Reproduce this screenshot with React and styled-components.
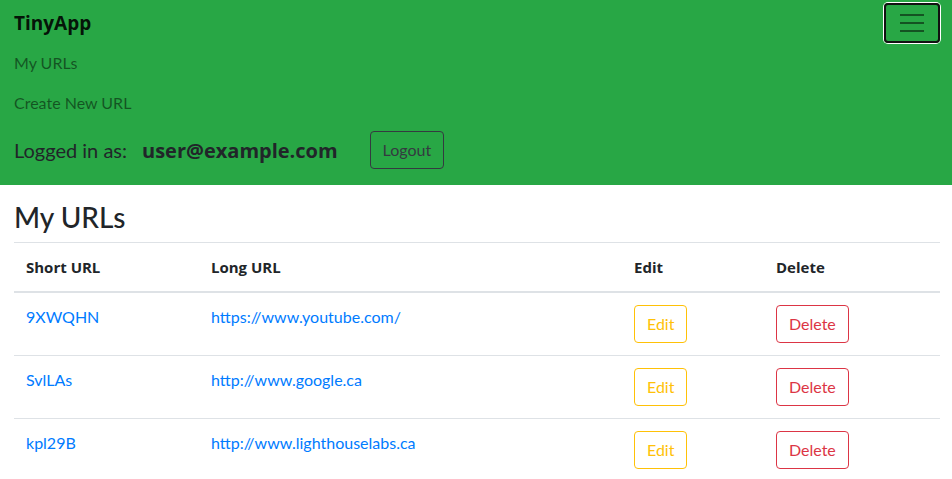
import React from 'react'
import styled, { createGlobalStyle } from 'styled-components'

const GlobalStyle = createGlobalStyle`
    * { box-sizing: border-box; }
    body {
        margin: 0;
        font-family: Lato, "Noto Sans", sans-serif;
        font-size: 16px;
        line-height: 1.5;
        color: #212529;
        background: #fff;
    }
`

const boldFont = `"Open Sans", Lato, sans-serif`

const Navbar = styled.nav`
    background: #28a745;
    padding: 3px 12px 16px 12px;
    display: flex;
    flex-direction: column;
`

const NavTop = styled.div`
    display: flex;
    justify-content: space-between;
    align-items: center;
`

const Brand = styled.a`
    font-family: ${boldFont};
    font-size: 19px;
    font-weight: 700;
    line-height: 30px;
    padding: 5px 2px;
    color: rgba(0, 0, 0, 0.9);
    text-decoration: none;
`

const Toggler = styled.button`
    width: 56px;
    height: 40px;
    background: transparent;
    border: 2px solid #111;
    border-radius: 4px;
    box-shadow: 0 0 0 1px #fff;
    display: flex;
    flex-direction: column;
    align-items: center;
    justify-content: center;
    gap: 6px;
    padding: 0;
    span {
        display: block;
        width: 24px;
        height: 2px;
        background: rgba(0, 0, 0, 0.5);
    }
`

const NavLink = styled.a`
    display: block;
    padding: 8px 2px;
    line-height: 24px;
    color: rgba(0, 0, 0, 0.5);
    text-decoration: none;
`

const UserRow = styled.div`
    display: flex;
    align-items: center;
    margin-top: 8px;
    padding-left: 2px;
`

const UserText = styled.span`
    font-size: 20px;
    color: #212529;
    margin-right: 32px;
    b {
        font-family: ${boldFont};
        margin-left: 15px;
        font-weight: 700;
    }
`

const Button = styled.button`
    font-family: inherit;
    font-size: 16px;
    line-height: 24px;
    padding: 6px 12px;
    background: transparent;
    border: 1px solid ${p => p.color};
    color: ${p => p.color};
    border-radius: 4px;
`

const Main = styled.main`
    padding: 0 12px 0 14px;
`

const Title = styled.h3`
    font-size: 28px;
    font-weight: 500;
    line-height: 1.2;
    margin: 16px 0 7px 0;
`

const Table = styled.table`
    width: 100%;
    border-collapse: collapse;
    th, td {
        text-align: left;
        vertical-align: top;
        padding: 12px;
        line-height: 24px;
        border-top: 1px solid #dee2e6;
    }
    th {
        font-family: ${boldFont};
        font-size: 15px;
        font-weight: 700;
        border-bottom: 2px solid #dee2e6;
    }
`

const Link = styled.a`
    color: #007bff;
    text-decoration: none;
`

const urls = [
    ['9XWQHN', 'https://www.youtube.com/'],
    ['SvlLAs', 'http://www.google.ca'],
    ['kpl29B', 'http://www.lighthouselabs.ca'],
]

export default function App() {
    return (
        <>
            <GlobalStyle />
            <Navbar>
                <NavTop>
                    <Brand href="#">TinyApp</Brand>
                    <Toggler>
                        <span /><span /><span />
                    </Toggler>
                </NavTop>
                <NavLink href="#">My URLs</NavLink>
                <NavLink href="#">Create New URL</NavLink>
                <UserRow>
                    <UserText>Logged in as:<b>user@example.com</b></UserText>
                    <Button color="#343a40">Logout</Button>
                </UserRow>
            </Navbar>
            <Main>
                <Title>My URLs</Title>
                <Table>
                    <thead>
                        <tr>
                            <th style={{ width: 185 }}>Short URL</th>
                            <th style={{ width: 423 }}>Long URL</th>
                            <th style={{ width: 142 }}>Edit</th>
                            <th>Delete</th>
                        </tr>
                    </thead>
                    <tbody>
                        {urls.map(([short, long]) => (
                            <tr key={short}>
                                <td><Link href="#">{short}</Link></td>
                                <td><Link href="#">{long}</Link></td>
                                <td><Button color="#ffc107">Edit</Button></td>
                                <td><Button color="#dc3545">Delete</Button></td>
                            </tr>
                        ))}
                    </tbody>
                </Table>
            </Main>
        </>
    )
}
